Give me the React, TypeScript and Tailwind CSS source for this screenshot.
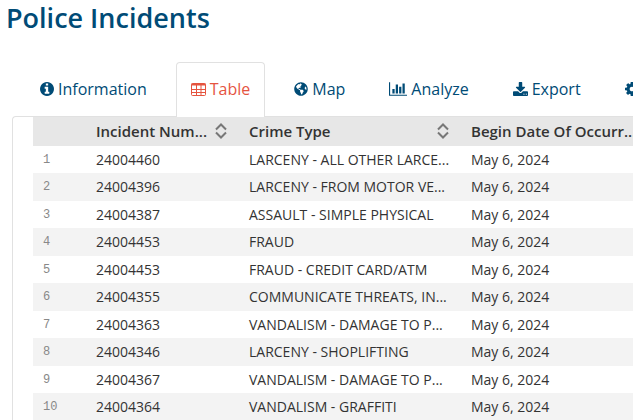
import React, { useState } from "react"
import clsx from "clsx"
import { FaGlobeAmericas } from "react-icons/fa"

const InfoIcon = () => (
  <svg viewBox="128 128 1536 1536" fill="currentColor" className="size-3.5 shrink-0">
    <path d="M1152 1376v-160q0-14-9-23t-23-9h-96v-512q0-14-9-23t-23-9h-320q-14 0-23 9t-9 23v160q0 14 9 23t23 9h96v320h-96q-14 0-23 9t-9 23v160q0 14 9 23t23 9h448q14 0 23-9t9-23zm-128-896v-160q0-14-9-23t-23-9h-192q-14 0-23 9t-9 23v160q0 14 9 23t23 9h192q14 0 23-9t9-23zm640 416q0 209-103 385.500t-279.500 279.500-385.500 103-385.500-103-279.500-279.500-103-385.500 103-385.500 279.500-279.500 385.500-103 385.500 103 279.500 279.500 103 385.500z" />
  </svg>
)

const TableIcon = () => (
  <svg viewBox="0 0 15 13" fill="none" stroke="currentColor" className="h-[13px] w-[15px] shrink-0">
    <rect x="0.5" y="0.5" width="14" height="12" rx="1" />
    <path d="M0.5 1.5h14" strokeWidth="2" />
    <path d="M1 6.500h13M1 9.500h13M5.500 2v10M10 2v10" />
  </svg>
)

const ChartIcon = () => (
  <svg viewBox="0 128 2048 1536" fill="currentColor" className="h-3.5 w-[18px] shrink-0">
    <path d="M640 896v512h-256v-512h256zm384-512v1024h-256v-1024h256zm1024 1152v128h-2048v-1536h128v1408h1920zm-640-896v768h-256v-768h256zm384-384v1152h-256v-1152h256z" />
  </svg>
)

const DownloadIcon = () => (
  <svg viewBox="64 0 1664 1536" fill="currentColor" className="h-3.5 w-[15px] shrink-0">
    <path d="M1344 1344q0-26-19-45t-45-19-45 19-19 45 19 45 45 19 45-19 19-45zm256 0q0-26-19-45t-45-19-45 19-19 45 19 45 45 19 45-19 19-45zm128-224v320q0 40-28 68t-68 28h-1472q-40 0-68-28t-28-68v-320q0-40 28-68t68-28h465l135 136q58 56 136 56t136-56l136-136h464q40 0 68 28t28 68zm-325-569q17 41-14 70l-448 448q-18 19-45 19t-45-19l-448-448q-31-29-14-70 17-39 59-39h256v-448q0-26 19-45t45-19h256q26 0 45 19t19 45v448h256q42 0 59 39z" />
  </svg>
)

const CogIcon = () => (
  <svg viewBox="128 128 1536 1536" fill="currentColor" className="size-3.5 shrink-0">
    <path d="M1152 896q0-106-75-181t-181-75-181 75-75 181 75 181 181 75 181-75 75-181zm512-109v222q0 12-8 23t-20 13l-185 28q-19 54-39 91 35 50 107 138 10 12 10 25t-9 23q-27 37-99 108t-94 71q-12 0-26-9l-138-108q-44 23-91 38-16 136-29 186-7 28-36 28h-222q-14 0-24.500-8.500t-11.500-21.500l-28-184q-49-16-90-37l-141 107q-10 9-25 9-14 0-25-11-126-114-165-168-7-10-7-23 0-12 8-23 15-21 51-66.500t54-70.500q-27-50-41-99l-183-27q-13-2-21-12.500t-8-23.500v-222q0-12 8-23t19-13l186-28q14-46 39-92-40-57-107-138-10-12-10-24 0-10 9-23 26-36 98.500-107.500t94.500-71.500q13 0 26 10l138 107q44-23 91-38 16-136 29-186 7-28 36-28h222q14 0 24.500 8.500t11.500 21.500l28 184q49 16 90 37l142-107q9-9 24-9 13 0 25 10 129 119 165 170 7 8 7 22 0 12-8 23-15 21-51 66.500t-54 70.500q26 50 41 98l183 28q13 2 21 12.500t8 23.500z" />
  </svg>
)

const SortIcon = () => (
  <svg viewBox="0 0 12 16" fill="none" stroke="#777" strokeWidth="2" className="h-4 w-3 shrink-0">
    <path d="M1 6.500L6 1.500l5 5M1 9.500l5 5 5-5" />
  </svg>
)

const tabs = [
  { label: "Information", icon: <InfoIcon /> },
  { label: "Table", icon: <TableIcon /> },
  { label: "Map", icon: <FaGlobeAmericas className="size-3.5 shrink-0" /> },
  { label: "Analyze", icon: <ChartIcon /> },
  { label: "Export", icon: <DownloadIcon /> },
  { label: "", icon: <CogIcon /> },
]

const columns = ["Incident Num...", "Crime Type", "Begin Date Of Occurr..."]

const rows = [
  ["24004460", "LARCENY - ALL OTHER LARCE...", "May 6, 2024"],
  ["24004396", "LARCENY - FROM MOTOR VE...", "May 6, 2024"],
  ["24004387", "ASSAULT - SIMPLE PHYSICAL", "May 6, 2024"],
  ["24004453", "FRAUD", "May 6, 2024"],
  ["24004453", "FRAUD - CREDIT CARD/ATM", "May 6, 2024"],
  ["24004355", "COMMUNICATE THREATS, IN...", "May 6, 2024"],
  ["24004363", "VANDALISM - DAMAGE TO P...", "May 6, 2024"],
  ["24004346", "LARCENY - SHOPLIFTING", "May 6, 2024"],
  ["24004367", "VANDALISM - DAMAGE TO P...", "May 6, 2024"],
  ["24004364", "VANDALISM - GRAFFITI", "May 6, 2024"],
]

export default function App() {
  const [active, setActive] = useState("Table")

  return (
    <main className="overflow-hidden bg-white font-['Open_Sans',sans-serif] text-[#333]">
      <h1 className="px-1.5 text-[27px] leading-9 font-semibold text-[#004b76]">
        Police Incidents
      </h1>

      <nav className="mt-[26px] -mb-px flex gap-3.5 pl-[25px]">
        {tabs.map(({ label, icon }) => (
          <button
            key={label}
            type="button"
            aria-label={label || "Settings"}
            onClick={() => setActive(label)}
            className={clsx(
              "relative flex h-[55px] shrink-0 items-center gap-1 rounded-t border border-b-0 px-3.5 pb-0.5 text-base whitespace-nowrap",
              active === label
                ? "border-[#e1e1e1] bg-white text-[#e5543f]"
                : "border-transparent text-[#004b76]"
            )}
          >
            {icon}
            {label}
          </button>
        ))}
      </nav>

      <section className="ml-3 overflow-hidden rounded-tl border-t border-l border-[#e1e1e1] pl-5">
        <table className="w-[650px] min-w-full table-fixed text-left">
          <colgroup>
            <col className="w-[53px]" />
            <col className="w-[153px]" />
            <col className="w-[222px]" />
            <col />
          </colgroup>
          <thead>
            <tr className="h-[29px] bg-[#e7e7e7]">
              <th aria-label="Row" />
              {columns.map((name) => (
                <th key={name} className="p-0 pr-3 pb-0.5 pl-2.5 text-[15px] leading-5 font-semibold">
                  <div className="flex items-center justify-between">
                    <span className="whitespace-nowrap">{name}</span>
                    <SortIcon />
                  </div>
                </th>
              ))}
            </tr>
          </thead>
          <tbody>
            {rows.map((row, i) => (
              <tr key={i} className="odd:h-[27px] even:h-7 even:bg-[#f3f3f3]">
                <td className="p-0 pl-2.5 font-['Liberation_Mono',monospace] text-xs text-[#888]">
                  {i + 1}
                </td>
                {row.map((cell, j) => (
                  <td key={j} className="p-0 pl-2.5 text-sm leading-5 whitespace-nowrap">
                    {cell}
                  </td>
                ))}
              </tr>
            ))}
          </tbody>
        </table>
      </section>
    </main>
  )
}
